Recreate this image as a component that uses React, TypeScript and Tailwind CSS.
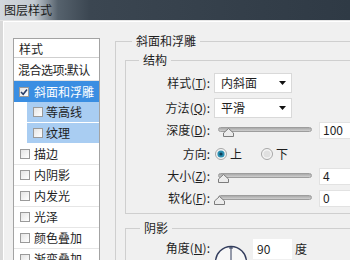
import type { ReactNode } from 'react'

// ── 왼쪽 스타일 목록 ──
const styleRows: { label: string; sub?: boolean }[] = [
  { label: '等高线', sub: true },
  { label: '纹理', sub: true },
  { label: '描边' },
  { label: '内阴影' },
  { label: '内发光' },
  { label: '光泽' },
  { label: '颜色叠加' },
  { label: '渐变叠加' },
]

function CheckBox({ checked = false }: { checked?: boolean }) {
  return (
    <span className="flex h-[10px] w-[10px] shrink-0 items-center justify-center border border-[#9a9a9a] bg-[linear-gradient(135deg,#e4e4e4,#ffffff)]">
      {checked && (
        <svg width="8" height="8" viewBox="0 0 8 8">
          <path d="M1 4 L3.2 6.2 L7 1.5" fill="none" stroke="#2a3f6a" strokeWidth="1.6" />
        </svg>
      )}
    </span>
  )
}

function Key({ k }: { k: string }) {
  return (
    <>
      (<span className="underline underline-offset-1">{k}</span>):
    </>
  )
}

function Label({ children }: { children: ReactNode }) {
  return <span className="w-[84px] shrink-0 text-right leading-[18px]">{children}</span>
}

function Dropdown({ value }: { value: string }) {
  return (
    <div className="ml-[4px] flex h-[20px] w-[78px] items-center justify-between border border-[#d9d9d9] bg-white pl-[6px] pr-[5px]">
      <span>{value}</span>
      <svg width="7" height="4" viewBox="0 0 7 4">
        <path d="M0 0 H7 L3.5 4 Z" fill="#111" />
      </svg>
    </div>
  )
}

function Slider({ pos }: { pos: number }) {
  return (
    <div className="relative ml-[8px] h-[18px] w-[94px]">
      <div className="absolute left-0 right-0 top-[6px] h-[5px] rounded-full border border-[#9d9d9d] bg-[linear-gradient(#a9a9a9,#cfcfcf)]" />
      <svg
        className="absolute top-[7px]"
        style={{ left: pos }}
        width="11"
        height="9"
        viewBox="0 0 11 9"
      >
        <path d="M5.5 0.5 L10.5 5 V8.5 H0.5 V5 Z" fill="#ececec" stroke="#7c7c7c" />
      </svg>
    </div>
  )
}

function NumBox({ value, h = 'h-[17px]' }: { value: string; h?: string }) {
  return (
    <div className={`ml-[7px] flex ${h} w-[50px] items-center border border-[#e2e2e2] bg-white pl-[3px]`}>
      {value}
    </div>
  )
}

function Radio({ on }: { on: boolean }) {
  return (
    <svg width="12" height="12" viewBox="0 0 12 12" className="shrink-0">
      <circle cx="6" cy="6" r="5.5" fill="#f4f4f4" stroke="#a6a6a6" />
      {on ? (
        <>
          <circle cx="6" cy="6" r="3.6" fill="#2b8fb2" />
          <circle cx="6" cy="6" r="1.6" fill="#0f3d55" />
        </>
      ) : (
        <circle cx="6" cy="6" r="3.6" fill="#e0e0e0" />
      )}
    </svg>
  )
}

export default function App() {
  return (
    <div className="h-[260px] w-[350px] overflow-hidden bg-[#d9d9d9] font-['Noto_Sans_CJK_SC',sans-serif] text-[12px] text-[#1e1e1e]">
      {/* 타이틀 바 */}
      <div className="flex h-[20px] items-center bg-[linear-gradient(to_right,#d3d8dd_0px,#c2c9d0_34px,#56626d_58px,#3b4651_90px,#2f3a45_350px)] pl-[4px] text-[12px] text-[#1a1a1a]">
        图层样式
      </div>
      <div className="h-[1px] bg-[#e6e6e6]" />

      {/* 본문 */}
      <div className="ml-[3px] flex h-full border-l border-t border-white bg-[#f0f0f0]">
        {/* 스타일 목록 */}
        <div className="shrink-0 pl-[9px] pt-[16px]">
          <div className="w-[87px] border border-[#a3a3a3] bg-white">
            <div className="h-[19px] border-b border-[#cfcfcf] pl-[5px] leading-[19px]">样式</div>
            <div className="h-[23px] border-b border-[#e3e3e3] pl-[4px] leading-[23px] tracking-[-0.5px]">
              混合选项:默认
            </div>
            <div className="flex h-[21px] items-center bg-[#3a8ee2] pl-[5px] text-white">
              <CheckBox checked />
              <span className="ml-[5px]">斜面和浮雕</span>
            </div>
            {styleRows.map((row) =>
              row.sub ? (
                <div key={row.label} className="border-b border-white bg-white">
                  <div className="ml-[13px] flex h-[20px] items-center bg-[#a9cdf2] pl-[6px]">
                    <CheckBox />
                    <span className="ml-[3px]">{row.label}</span>
                  </div>
                </div>
              ) : (
                <div
                  key={row.label}
                  className="flex h-[21px] items-center border-b border-[#e6e6e6] pl-[6px]"
                >
                  <CheckBox />
                  <span className="ml-[4px]">{row.label}</span>
                </div>
              ),
            )}
          </div>
        </div>

        {/* 오른쪽 설정 영역 */}
        <fieldset className="ml-[15px] mt-[11px] w-[300px] shrink-0 border border-[#cfcfcf]">
          <legend className="ml-[16px] px-[4px] text-[12px] leading-[16px]">斜面和浮雕</legend>

          {/* 구조 */}
          <fieldset className="ml-[9px] mt-[3px] border border-[#cfcfcf] pb-[6px]">
            <legend className="ml-[13px] px-[4px] leading-[16px]">结构</legend>

            <div className="mt-[5px] flex items-center">
              <Label>
                样式<Key k="T" />
              </Label>
              <Dropdown value="内斜面" />
            </div>
            <div className="mt-[5px] flex items-center">
              <Label>
                方法<Key k="Q" />
              </Label>
              <Dropdown value="平滑" />
            </div>
            <div className="mt-[3px] flex items-center">
              <Label>
                深度<Key k="D" />
              </Label>
              <Slider pos={5} />
              <NumBox value="100" />
            </div>
            <div className="mt-[6px] flex h-[18px] items-center">
              <Label>方向:</Label>
              <span className="ml-[5px] flex items-center">
                <Radio on />
                <span className="ml-[3px]">上</span>
              </span>
              <span className="ml-[19px] flex items-center">
                <Radio on={false} />
                <span className="ml-[3px]">下</span>
              </span>
            </div>
            <div className="mt-[4px] flex items-center">
              <Label>
                大小<Key k="Z" />
              </Label>
              <Slider pos={0} />
              <NumBox value="4" />
            </div>
            <div className="mt-[4px] flex items-center">
              <Label>
                软化<Key k="F" />
              </Label>
              <Slider pos={-4} />
              <NumBox value="0" />
            </div>
          </fieldset>

          {/* 그림자 */}
          <fieldset className="ml-[9px] mt-[6px] h-[80px] border border-[#cfcfcf]">
            <legend className="ml-[14px] px-[4px] leading-[16px]">阴影</legend>
            <div className="mt-[3px] flex items-start">
              <Label>
                角度<Key k="N" />
              </Label>
              <svg width="34" height="34" viewBox="0 0 34 34" className="ml-[5px] mt-[6px] shrink-0">
                <circle cx="16" cy="17" r="15.5" fill="#f7f7f7" stroke="#323c5c" strokeWidth="1.3" />
                <path d="M16 17 V2" stroke="#323c5c" strokeWidth="1" />
                <path d="M14 3 H18" stroke="#323c5c" strokeWidth="1" />
              </svg>
              <div className="ml-[4px] flex h-[20px] w-[39px] items-center bg-white pl-[4px]">90</div>
              <span className="ml-[3px] leading-[20px]">度</span>
            </div>
          </fieldset>
        </fieldset>
      </div>
    </div>
  )
}
